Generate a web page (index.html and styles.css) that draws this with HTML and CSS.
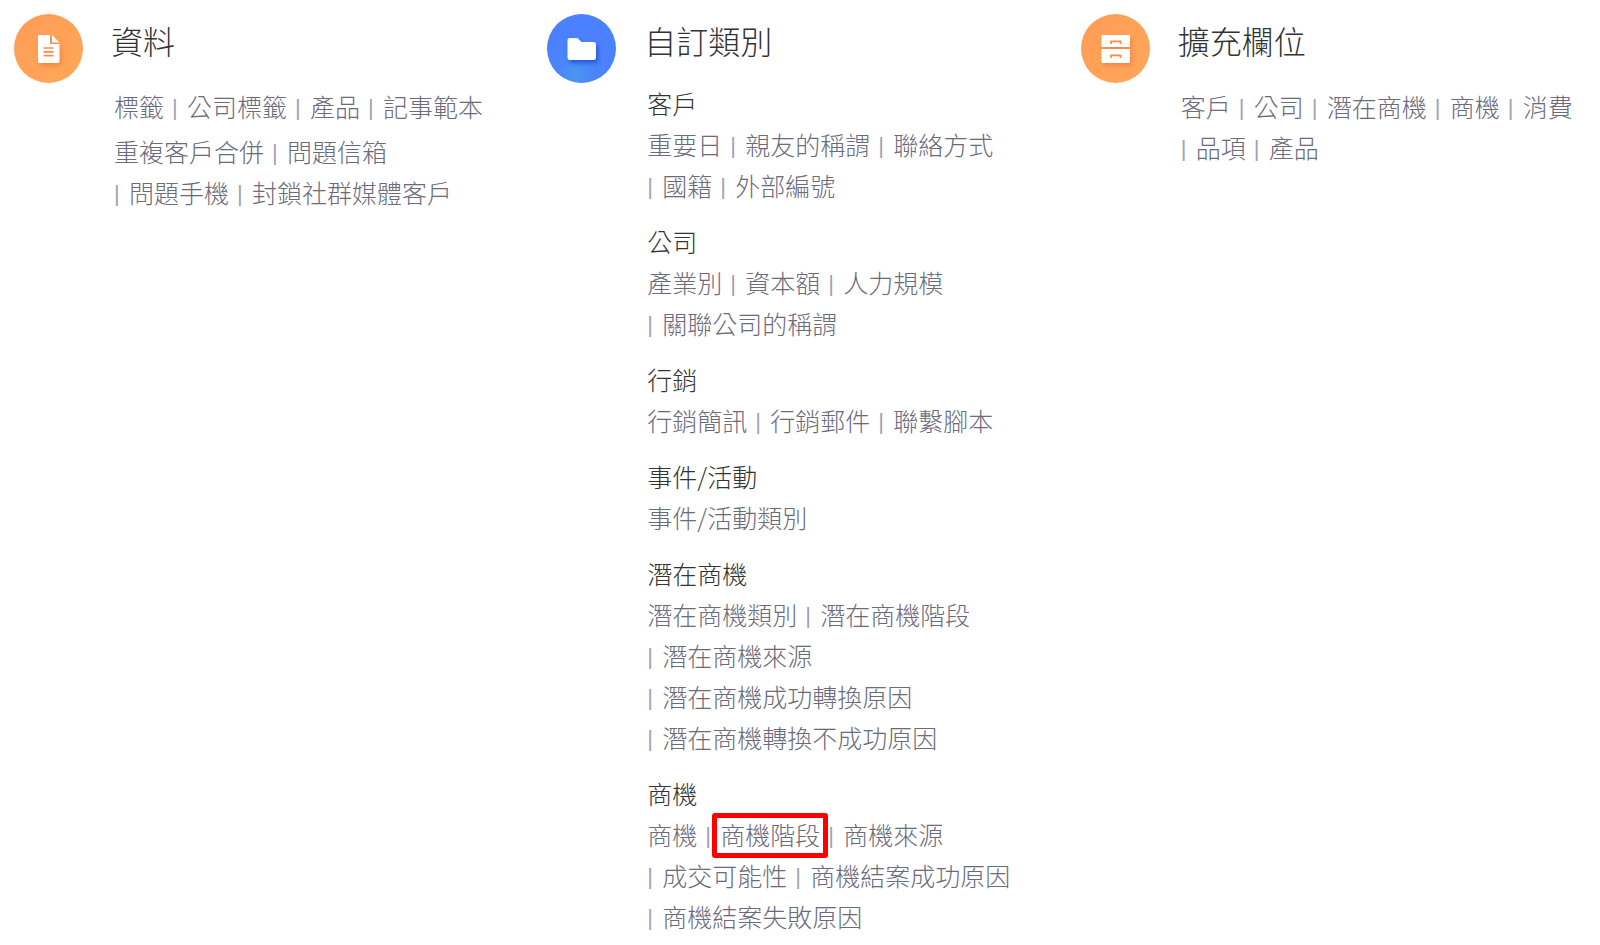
FILE: index.html
```html
<!DOCTYPE html>
<html lang="zh-Hant">
<head>
<meta charset="utf-8">
<title>設定</title>
<link rel="stylesheet" href="styles.css">
</head>
<body>
<main class="settings">
  <section class="panel">
    <div class="badge badge-orange">
      <svg class="icon" viewBox="0 0 69 69" aria-hidden="true">
        <path fill="#fff" d="M25 21H36V30H45.500V47.500Q45.500 49 44 49H25.500Q24 49 24 47.500V22Q24 21 25 21Z"/>
        <path fill="#fff" d="M38 21L45.500 28.500H38Z"/>
        <path stroke="#ff8a48" stroke-width="1.700" d="M29.500 34H39.500M29.500 37.800H39.500M29.500 41.600H39.500"/>
      </svg>
    </div>
    <div class="content">
      <h2 class="title">資料</h2>
      <div class="stack">
        <ul class="links">
          <li><a href="#">標籤</a></li>
          <li><span class="sep">|</span><a href="#">公司標籤</a></li>
          <li><span class="sep">|</span><a href="#">產品</a></li>
          <li><span class="sep">|</span><a href="#">記事範本</a></li>
        </ul>
        <ul class="links">
          <li><a href="#">重複客戶合併</a></li>
          <li><span class="sep">|</span><a href="#">問題信箱</a></li>
          <li><span class="sep">|</span><a href="#">問題手機</a></li>
          <li><span class="sep">|</span><a href="#">封鎖社群媒體客戶</a></li>
        </ul>
      </div>
    </div>
  </section>

  <section class="panel">
    <div class="badge badge-blue">
      <svg class="icon" viewBox="0 0 69 69" aria-hidden="true">
        <path fill="#fff" d="M22.500 24H30.500L34.500 28H46.500Q49 28 49 30.500V43.500Q49 46 46.500 46H23Q20.500 46 20.500 43.500V26Q20.500 24 22.500 24Z"/>
      </svg>
    </div>
    <div class="content">
      <h2 class="title">自訂類別</h2>
      <div class="groups">
        <div>
          <h3 class="subtitle">客戶</h3>
          <ul class="links">
            <li><a href="#">重要日</a></li>
            <li><span class="sep">|</span><a href="#">親友的稱謂</a></li>
            <li><span class="sep">|</span><a href="#">聯絡方式</a></li>
            <li><span class="sep">|</span><a href="#">國籍</a></li>
            <li><span class="sep">|</span><a href="#">外部編號</a></li>
          </ul>
        </div>
        <div>
          <h3 class="subtitle">公司</h3>
          <ul class="links">
            <li><a href="#">產業別</a></li>
            <li><span class="sep">|</span><a href="#">資本額</a></li>
            <li><span class="sep">|</span><a href="#">人力規模</a></li>
            <li><span class="sep">|</span><a href="#">關聯公司的稱謂</a></li>
          </ul>
        </div>
        <div>
          <h3 class="subtitle">行銷</h3>
          <ul class="links">
            <li><a href="#">行銷簡訊</a></li>
            <li><span class="sep">|</span><a href="#">行銷郵件</a></li>
            <li><span class="sep">|</span><a href="#">聯繫腳本</a></li>
          </ul>
        </div>
        <div>
          <h3 class="subtitle">事件/活動</h3>
          <ul class="links">
            <li><a href="#">事件/活動類別</a></li>
          </ul>
        </div>
        <div>
          <h3 class="subtitle">潛在商機</h3>
          <ul class="links">
            <li><a href="#">潛在商機類別</a></li>
            <li><span class="sep">|</span><a href="#">潛在商機階段</a></li>
            <li><span class="sep">|</span><a href="#">潛在商機來源</a></li>
            <li><span class="sep">|</span><a href="#">潛在商機成功轉換原因</a></li>
            <li><span class="sep">|</span><a href="#">潛在商機轉換不成功原因</a></li>
          </ul>
        </div>
        <div>
          <h3 class="subtitle">商機</h3>
          <ul class="links">
            <li><a href="#">商機</a></li>
            <li><span class="sep">|</span><a class="marked" href="#">商機階段</a></li>
            <li><span class="sep">|</span><a href="#">商機來源</a></li>
            <li><span class="sep">|</span><a href="#">成交可能性</a></li>
            <li><span class="sep">|</span><a href="#">商機結案成功原因</a></li>
            <li><span class="sep">|</span><a href="#">商機結案失敗原因</a></li>
          </ul>
        </div>
      </div>
    </div>
  </section>

  <section class="panel">
    <div class="badge badge-orange">
      <svg class="icon" viewBox="0 0 69 69" aria-hidden="true">
        <path fill="#fff" d="M21.500 21H48Q49 21 49 22V33H20.500V22Q20.500 21 21.500 21ZM20.500 35H49V48Q49 49 48 49H21.500Q20.500 49 20.500 48Z"/>
        <path fill="none" stroke="#ff8a48" stroke-width="1.700" d="M30 30V27.300H39.500V30M30 44V41.300H39.500V44"/>
      </svg>
    </div>
    <div class="content">
      <h2 class="title">擴充欄位</h2>
      <div class="stack">
        <ul class="links">
          <li><a href="#">客戶</a></li>
          <li><span class="sep">|</span><a href="#">公司</a></li>
          <li><span class="sep">|</span><a href="#">潛在商機</a></li>
          <li><span class="sep">|</span><a href="#">商機</a></li>
          <li><span class="sep">|</span><a href="#">消費</a></li>
          <li><span class="sep">|</span><a href="#">品項</a></li>
          <li><span class="sep">|</span><a href="#">產品</a></li>
        </ul>
      </div>
    </div>
  </section>
</main>
</body>
</html>
```
FILE: styles.css
```css
* {
  box-sizing: border-box;
}

body {
  margin: 0;
  background: #fff;
  color: #333;
  font-family: "Noto Sans CJK TC", sans-serif;
  font-size: 25px;
  font-weight: 300;
  line-height: 41px;
}

.settings {
  display: grid;
  grid-template-columns: repeat(3, 1fr);
}

.panel {
  display: flex;
  align-items: flex-start;
  gap: 28px;
  min-width: 0;
  padding: 14px 25px 0 14px;
}

.badge {
  flex: none;
  width: 69px;
  height: 69px;
  border-radius: 50%;
}

.badge-orange {
  background: linear-gradient(135deg, #ff9b58, #ffa257 50%, #ffa65a);
}

.badge-blue {
  background: radial-gradient(circle at 40% 88%, #4a98ee, #4a86fa 22%, #4b80ff 50%);
}

.icon {
  display: block;
  width: 100%;
  height: 100%;
}

.badge-orange .icon {
  filter: drop-shadow(2px 3px 2px #f27a3fb3);
}

.badge-blue .icon {
  filter: drop-shadow(2px 3px 2px #1744c8b3);
}

.content {
  flex: 1;
  min-width: 0;
}

.title {
  margin: 0;
  padding-top: 2px;
  font-size: 32px;
  font-weight: 300;
  line-height: 48px;
}

.groups,
.stack {
  display: flex;
  flex-direction: column;
  padding-left: 3px;
}

.groups {
  gap: 15px;
  padding-top: 19px;
}

.stack {
  gap: 4px;
  padding-top: 22px;
}

.subtitle {
  margin: 0;
  font-size: 25px;
  font-weight: 300;
}

.links {
  display: flex;
  flex-wrap: wrap;
  column-gap: 8px;
  margin: 0;
  padding: 0;
  list-style: none;
}

.links li {
  display: flex;
  white-space: nowrap;
}

.links a {
  color: #6b6b7b;
  text-decoration: none;
}

.sep {
  width: 15px;
  color: #a2a2b4;
  font-family: "Liberation Sans", sans-serif;
  font-size: 22px;
  line-height: 43px;
  height: 41px;
}

.marked {
  position: relative;
}

.marked::after {
  content: "";
  position: absolute;
  inset: -1px -8px -3px;
  border: 5px solid #f00;
  border-radius: 3px;
}
```
